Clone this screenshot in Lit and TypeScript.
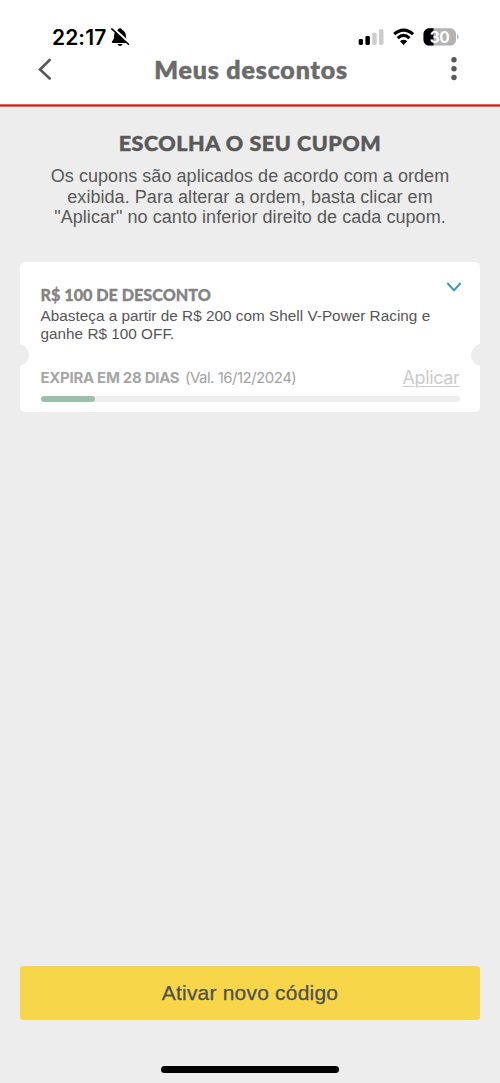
import { LitElement, html, css } from "lit";
import { customElement, property } from "lit/decorators.js";

@customElement("status-bar")
class StatusBar extends LitElement {
  static styles = css`
    :host { display: flex; height: 50px; padding: 0 41px 0 52px; box-sizing: border-box; justify-content: space-between; }
    .left, .right { display: flex; align-items: flex-start; }
    .time { font: 600 21px/26px Inter, sans-serif; color: #000; padding-top: 25px; width: 58px; letter-spacing: 0.1px; white-space: nowrap; }
    .bell { margin-top: 27px; }
    .icons { margin-top: 27px; }
    svg { display: block; }
    .lvl { font: 700 15.5px Inter, sans-serif; fill: #fff; }
  `;
  render() {
    return html`
      <div class="left">
        <div class="time">22:17</div>
        <svg class="bell" width="21" height="21" viewBox="0 0 21 21">
          <path d="M10 1.2c1.2 0 2 .8 2.1 1.7 2.5.8 3.7 3 3.8 5.600.1 3.300.7 4.500 2 5.700.6.6.4 1.800-.7 1.800H2.800c-1.100 0-1.300-1.200-.7-1.800 1.300-1.200 1.900-2.400 2-5.700.1-2.600 1.300-4.800 3.800-5.600C8 2 8.800 1.200 10 1.200z" fill="#000"/>
          <path d="M7.500 17h5c-.3 1.300-1.300 2-2.500 2s-2.200-.7-2.500-2z" fill="#000"/>
          <path d="M3 1.300L19.600 16.600" stroke="#fff" stroke-width="2.800"/>
          <path d="M1.800 1.900L18.500 17.300" stroke="#000" stroke-width="1.500" stroke-linecap="round"/>
        </svg>
      </div>
      <svg class="icons right" width="101" height="20" viewBox="0 0 101 20">
        <rect x="0.700" y="12" width="4.300" height="6" rx="1.400"/>
        <rect x="7.400" y="9" width="4.500" height="9" rx="1.400"/>
        <rect x="14.200" y="5.700" width="4.500" height="12.300" rx="1.400" fill="#ccc"/>
        <rect x="21" y="2.300" width="4.500" height="15.700" rx="1.400" fill="#ccc"/>
        <g fill="none" stroke="#000" stroke-width="3.100">
          <path d="M36.200 7.200C42 1.700 49.200 1.700 55 7.200"/>
          <path d="M39.700 11.200C43.400 7.800 47.800 7.800 51.500 11.200"/>
        </g>
        <path d="M42 14.200q3.600-2.900 7.200 0l-3.600 3.800z"/>
        <clipPath id="b"><rect x="65.500" y="1.300" width="32.500" height="17.200" rx="5.500"/></clipPath>
        <g clip-path="url(#b)">
          <rect x="65" y="1" width="34" height="18" fill="#b3b3b3"/>
          <rect x="65" y="1" width="10.500" height="18"/>
        </g>
        <path d="M99 7.200q1.700.7 1.700 2.600T99 12.400z" fill="#b3b3b3"/>
        <text class="lvl" x="81.500" y="15.600" text-anchor="middle" letter-spacing="-0.5">30</text>
      </svg>`;
  }
}

@customElement("coupon-card")
class CouponCard extends LitElement {
  @property() heading = "";
  @property() description = "";
  @property() expiry = "";
  @property() until = "";
  @property({ type: Number }) progress = 0;
  static styles = css`
    :host { display: block; position: relative; height: 150px; box-sizing: border-box; padding: 22px 20px 0 20.500px; background: #fff; border-radius: 5px; }
    .notch { position: absolute; top: 82px; width: 21.500px; height: 21.500px; border-radius: 50%; background: #ededed; }
    .l { left: -12.500px; }
    .r { right: -13px; }
    .top { display: flex; justify-content: space-between; height: 23px; }
    .heading { font: 900 16.200px/21px Lato, sans-serif; color: #838383; letter-spacing: 0; white-space: nowrap; -webkit-text-stroke: 0.3px #838383; }
    .top svg { margin: -3px -2px 0 0; }
    .desc { font: 15.300px/17.700px "Liberation Sans", sans-serif; color: #555; height: 36px; white-space: pre; letter-spacing: 0.02px; }
    .desc::first-line { letter-spacing: 0.02px; }
    .row { display: flex; height: 26px; margin-top: 22px; align-items: center; white-space: nowrap; }
    .expiry { font: 700 15px/20px Inter, sans-serif; color: #a6a6a6; letter-spacing: -0.3px; width: 144.500px; }
    .until { font: 400 15px/20px Inter, sans-serif; color: #a3a3a3; letter-spacing: -0.5px; }
    .apply { margin-left: auto; font: 400 18px/22px Inter, sans-serif; color: #ccc; letter-spacing: -0.35px; text-decoration: underline; text-decoration-thickness: 1px; text-underline-offset: 2px; }
    .track { height: 5.500px; margin-top: 5px; background: #eee; border-radius: 3px; }
    .fill { height: 100%; background: #98c2a9; border-radius: 3px; }
  `;
  render() {
    return html`
      <div class="notch l"></div><div class="notch r"></div>
      <div class="top">
        <div class="heading">${this.heading}</div>
        <svg width="16" height="12" viewBox="0 0 16 12"><path d="M1.300 2L8 9.300L14.700 2" fill="none" stroke="#3499b3" stroke-width="1.900"/></svg>
      </div>
      <div class="desc">${this.description}</div>
      <div class="row">
        <span class="expiry">${this.expiry}</span><span class="until">${this.until}</span><span class="apply">Aplicar</span>
      </div>
      <div class="track"><div class="fill" style="width:${this.progress}%"></div></div>`;
  }
}

@customElement("app-root")
class AppRoot extends LitElement {
  static styles = css`
    :host { display: flex; flex-direction: column; height: 1083px; background: #ededed; overflow: hidden; }
    header { height: 107px; box-sizing: border-box; background: #fff; border-bottom: 1px solid #db6a62; }
    .rule { height: 1px; margin-top: 16px; background: #c5281c; border-top: 1px solid #db6a62; }
    .bar { display: flex; justify-content: space-between; align-items: center; height: 38px; padding: 0 41px 0 37px; }
    .bar svg { display: block; }
    h1 { margin: 0; font: 900 25px/38px Lato, sans-serif; color: #6b6b6b; letter-spacing: 0.85px; white-space: nowrap; -webkit-text-stroke: 0.6px #6b6b6b; }
    h2 { margin: 23px 0 0; text-align: center; font: 900 21.500px/26px Lato, sans-serif; color: #595959; letter-spacing: 0.55px; -webkit-text-stroke: 0.5px #595959; }
    p { margin: 10px 0 0; text-align: center; font: 18px/20.500px "Liberation Sans", sans-serif; color: #595959; white-space: pre; height: 61.500px; letter-spacing: 0.05px; }
    coupon-card { margin: 34.500px 20.500px 0 20px; }
    button { margin: auto 20px 0; height: 54px; flex: none; border: 0; border-radius: 3px; background: #f7d749; color: #4f4f4f; font: 21px/54px "Liberation Sans", sans-serif; letter-spacing: 0.2px; padding: 0; -webkit-text-stroke: 0.25px #4f4f4f; }
    .home { flex: none; width: 178px; height: 7px; margin: 46px auto 10px; border-radius: 4px; background: #000; }
  `;
  render() {
    return html`
      <header>
        <status-bar></status-bar>
        <div class="bar">
          <svg width="16" height="24" viewBox="0 0 16 24"><path d="M12.700 3L3 12.500L12.700 21.500" fill="none" stroke="#595959" stroke-width="2.600" stroke-linecap="round"/></svg>
          <h1>Meus descontos</h1>
          <svg width="10" height="24" viewBox="0 0 10 24" fill="#595959"><circle cx="5" cy="2.800" r="2.700"/><circle cx="5" cy="11.700" r="2.700"/><circle cx="5" cy="20.500" r="2.700"/></svg>
        </div>
        <div class="rule"></div>
      </header>
      <h2>ESCOLHA O SEU CUPOM</h2>
      <p>Os cupons são aplicados de acordo com a ordem
exibida. Para alterar a ordem, basta clicar em
"Aplicar" no canto inferior direito de cada cupom.</p>
      <coupon-card
        heading="R$ 100 DE DESCONTO"
        .description=${"Abasteça a partir de R$ 200 com Shell V-Power Racing e\nganhe R$ 100 OFF."}
        expiry="EXPIRA EM 28 DIAS"
        until="(Val. 16/12/2024)"
        .progress=${13.1}
      ></coupon-card>
      <button>Ativar novo código</button>
      <div class="home"></div>`;
  }
}
